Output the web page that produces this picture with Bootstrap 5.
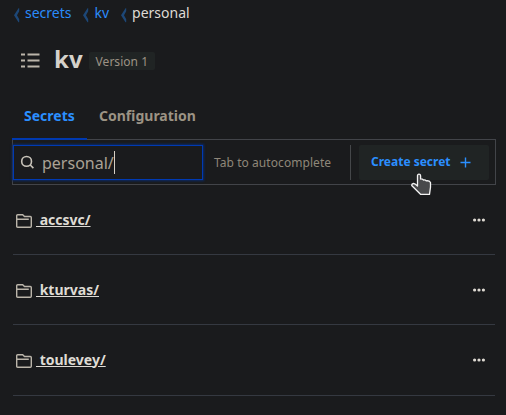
<!DOCTYPE html>
<html lang="en">
<head>
<meta charset="utf-8">
<meta name="viewport" content="width=device-width, initial-scale=1">
<title>kv secrets</title>
<link href="https://cdn.jsdelivr.net/npm/bootstrap@5.3.0/dist/css/bootstrap.min.css" rel="stylesheet">
<style>
body { background: #1a1b1d; color: #dedad4; font-family: "Noto Sans", sans-serif; font-size: 14px; line-height: 20px; overflow: hidden; }
a { color: #2a8cfa; }
svg { display: block; flex: none; }
.page { padding: 0 10px 0 12px; }
.crumbs { height: 26px; padding-top: 3px; }
.crumbs a, .crumbs span { margin-left: 5px; margin-right: 10px; }
.crumbs svg { margin-top: 5px; }
.title-row { height: 69px; padding: 0 0 0 8px; }
.title-row h1 { font-size: 24px; line-height: 32px; font-weight: 700; margin: -4px 6px 0 14px; color: #d5d1ca; }
.version { font-size: 12px; line-height: 17px; font-weight: 400; padding: 1px 7px 0; margin-top: 1px; border-radius: 2px; background: #202424; color: #9c9384; letter-spacing: .03px; }
.tabs { height: 44px; }
.tabs .nav-link { padding: 11px 12px 0; height: 45px; font-weight: 700; color: #9c9384; border-bottom: 2px solid transparent; position: relative; }
.tabs .nav-link.active { color: #2b8fff; border-color: #0039b0; width: 75px; }
.toolbar { height: 46px; border: 1px solid #424449; }
.search { width: 190px; height: 35px; border: 1px solid #003ab3; box-shadow: 0 0 2px 1px #0b2a66; padding-left: 6px; font-size: 16px; color: #aaa295; }
.search .path-text { padding-top: 2px; }
.caret { width: 1px; height: 23px; background: #d5cfc5; }
.hint { font-size: 12px; color: #8f8779; margin-left: 11px; padding-top: 1px; letter-spacing: .06px; }
.rule { width: 1px; height: 35px; background: #45474a; }
.create { width: 130px; height: 35px; background: #202424; border: 0; border-radius: 2px; color: #2b8fff; font-size: 12px; font-weight: 700; padding: 0 0 1px 12px; margin: 0 6px 0 8px; }
.create svg { margin: 1px 0 0 9px; }
.secret { height: 70px; border-bottom: 1px solid #353941; margin: 0 1px; padding: 0 10px 0 3px; }
.secret:last-child { height: 71px; padding-bottom: 1px; }
.secret .folder { margin-top: 2px; }
.secret a { color: #dfdbd4; font-weight: 700; white-space: pre; margin-left: 4px; }
.pointer { left: 410px; top: 173px; }
</style>
<script src="https://cdn.jsdelivr.net/npm/bootstrap@5.3.0/dist/js/bootstrap.bundle.min.js"></script>
</head>
<body>
<svg class="d-none">
  <symbol id="chev" viewBox="0 0 8 15"><path d="M6.500.3h.7v3L5 7.300l2.200 4v3h-.7L2 7.300z" fill="#1d4777"/></symbol>
  <symbol id="folder" viewBox="0 0 16 14"><path d="M.7 12.300V1.700q0-1 1-1h5L8.500 2.500h5.800q1 0 1 1v8.800q0 1-1 1H1.700q-1 0-1-1zM.8 5.300h12" fill="none" stroke="#bbb5aa" stroke-width="1.400"/></symbol>
  <symbol id="dots" viewBox="0 0 12 4"><g fill="#ddd9d2"><circle cx="1.600" cy="2" r="1.600"/><circle cx="6" cy="2" r="1.600"/><circle cx="10.400" cy="2" r="1.600"/></g></symbol>
</svg>
<main class="page">
  <nav class="crumbs d-flex">
    <svg width="8" height="15"><use href="#chev"/></svg><a href="#" class="text-decoration-none">secrets</a>
    <svg width="8" height="15"><use href="#chev"/></svg><a href="#" class="text-decoration-none">kv</a>
    <svg width="8" height="15"><use href="#chev"/></svg><span>personal</span>
  </nav>
  <header class="title-row d-flex align-items-center">
    <svg width="20" height="15" viewBox="0 -.5 20 15" fill="#bbb5aa"><path d="M1 0h4v2H1zM7.500 0h12v2h-12zM1 6h4v2H1zM7.500 6h12v2h-12zM1 12h4v2H1zM7.500 12h12v2h-12z"/></svg>
    <h1>kv</h1><span class="version">Version 1</span>
  </header>
  <nav class="nav tabs">
    <a class="nav-link active" href="#">Secrets</a>
    <a class="nav-link" href="#">Configuration</a>
  </nav>
  <div class="toolbar d-flex align-items-center">
    <div class="search d-flex align-items-center">
      <svg width="14" height="14" viewBox="0 0 14 14" fill="none" stroke="#c9c4ba" stroke-width="1.600"><circle cx="6.600" cy="6.400" r="4.900"/><path d="m10 9.800 3.400 3.300"/></svg>
      <span class="path-text ms-2">personal/</span><span class="caret"></span>
    </div>
    <span class="hint">Tab to autocomplete</span>
    <span class="rule ms-auto"></span>
    <button class="create d-flex align-items-center" type="button">Create secret<svg width="11" height="11" viewBox="0 0 11 11"><path d="M5.500.5v10M.5 5.500h10" stroke="#2b8fff" stroke-width="1.400"/></svg></button>
  </div>
  <div class="secrets">
    <div class="secret d-flex align-items-center"><svg class="folder" width="16" height="14"><use href="#folder"/></svg><a href="#"> accsvc/</a><svg class="ms-auto" width="12" height="4"><use href="#dots"/></svg></div>
    <div class="secret d-flex align-items-center"><svg class="folder" width="16" height="14"><use href="#folder"/></svg><a href="#"> kturvas/</a><svg class="ms-auto" width="12" height="4"><use href="#dots"/></svg></div>
    <div class="secret d-flex align-items-center"><svg class="folder" width="16" height="14"><use href="#folder"/></svg><a href="#"> toulevey/</a><svg class="ms-auto" width="12" height="4"><use href="#dots"/></svg></div>
  </div>
</main>
<svg class="pointer position-absolute" width="22" height="23" viewBox="0 0 22 23"><path d="M7.500 11.500V2.800q0-1.600 1.500-1.600t1.600 1.600V6q1.700-.2 2.900 1 1.700-.3 2.700.8 3.200-.4 4.300 1.700v4.700L19.500 21.300H10.500L1.700 12.500q-.2-1.700 1.600-2 1.500-.2 4.200 2.500z" fill="#48494b" stroke="#f3f3f3" stroke-width="1.300" stroke-linejoin="round"/></svg>
</body>
</html>
